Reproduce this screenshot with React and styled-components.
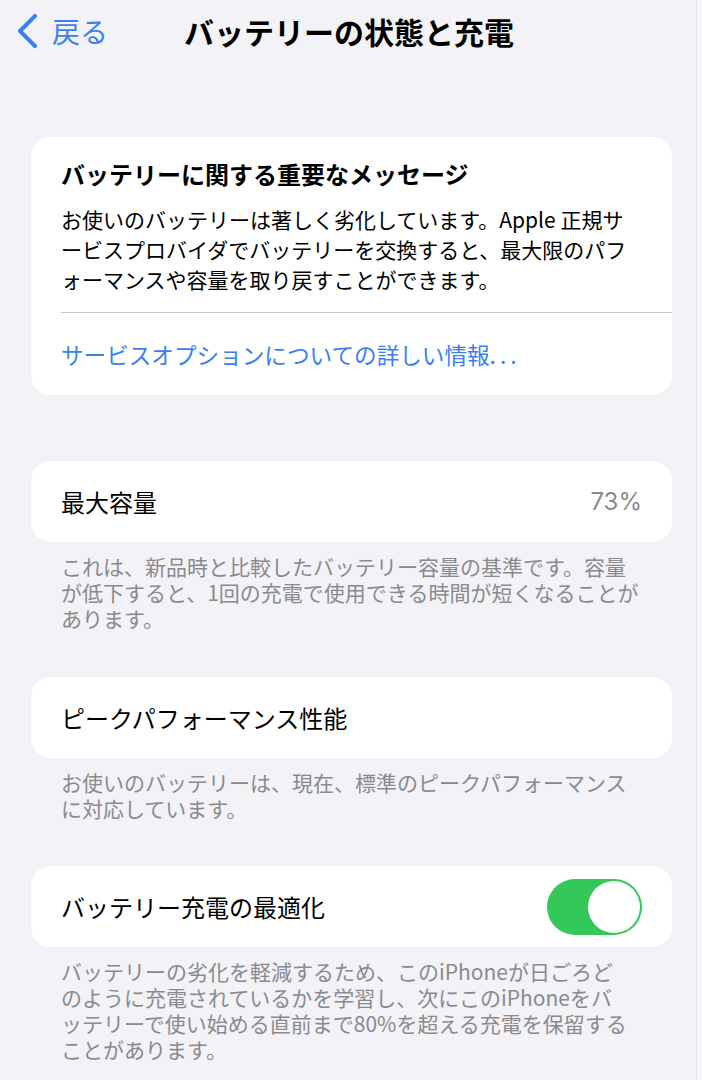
import React from "react";
import styled, { createGlobalStyle } from "styled-components";

const Global = createGlobalStyle`
  html, body { margin: 0; padding: 0; background: #f2f2f7; }
  body {
    font-family: "Noto Sans CJK JP", "Noto Sans", sans-serif;
    -webkit-font-smoothing: antialiased;
  }
`;

const Page = styled.div`
  display: grid;
  grid-template-columns: 696px 6px;
  width: 702px;
  min-height: 1080px;
  background: #f2f2f7;
`;

const Edge = styled.div`
  border-left: 1px solid #e3e3e8;
  background: #f6f6f9;
`;

const Main = styled.div`
  display: flex;
  flex-direction: column;
  padding: 0 24px 0 31px;
`;

const Nav = styled.div`
  display: flex;
  align-items: center;
  height: 62px;
  margin-left: -31px;
`;

const Back = styled.div`
  display: flex;
  align-items: center;
  gap: 13px;
  padding-left: 17px;
  color: #3a80f2;
  font-size: 28px;
  line-height: 1;
`;

const Title = styled.div`
  margin-left: 76px;
  font-size: 30px;
  font-weight: 700;
  color: #000;
`;

const Card = styled.div`
  background: #fff;
  border-radius: 20px;
  margin-top: ${(p) => p.$mt || 0}px;
`;

const Message = styled.div`
  padding: 22px 30px 18px 30px;
`;

const MsgTitle = styled.div`
  font-size: 24px;
  font-weight: 700;
  line-height: 30px;
  color: #000;
`;

const MsgBody = styled.div`
  margin-top: 15px;
  font-size: 21px;
  line-height: 30px;
  color: #000;
  white-space: nowrap;
`;

const Separator = styled.div`
  height: 1px;
  background: #c8c8cc;
  margin-left: 30px;
`;

const LinkRow = styled.div`
  padding: 27px 30px 25px 30px;
  font-size: 22.6px;
  line-height: 30px;
  color: #3a80f2;
`;

const Dots = styled.span`
  letter-spacing: 4px;
`;

const Row = styled.div`
  display: flex;
  align-items: center;
  justify-content: space-between;
  height: 81px;
  padding: 0 30px 0 30px;
  font-size: 24px;
  color: #000;
`;

const Value = styled.span`
  color: #8a8a8e;
  font-size: 24px;
  font-family: "Inter", "Liberation Sans", sans-serif;
`;

const Footer = styled.div`
  padding: 11px 30px 0 30px;
  font-size: 21px;
  line-height: 26px;
  color: #8a8a8e;
  white-space: nowrap;
`;

const Toggle = styled.div`
  display: flex;
  justify-content: ${(p) => (p.$on ? "flex-end" : "flex-start")};
  align-items: center;
  width: 95px;
  height: 56px;
  padding: 2px;
  box-sizing: border-box;
  border-radius: 28px;
  background: ${(p) => (p.$on ? "#34c759" : "#e9e9eb")};
`;

const Knob = styled.div`
  width: 52px;
  height: 52px;
  border-radius: 50%;
  background: #fff;
`;

const Chevron = () => (
  <svg width="22" height="34" viewBox="0 0 22 34" fill="none">
    <path
      d="M18 2 L3 17 L18 32"
      stroke="#3a80f2"
      strokeWidth="4"
      strokeLinecap="round"
      strokeLinejoin="round"
    />
  </svg>
);

export default function App() {
  return (
    <>
      <Global />
      <Page>
        <Main>
          <Nav>
            <Back>
              <Chevron />
              <span>戻る</span>
            </Back>
            <Title>バッテリーの状態と充電</Title>
          </Nav>

          <Card $mt={75}>
            <Message>
              <MsgTitle>バッテリーに関する重要なメッセージ</MsgTitle>
              <MsgBody>
                お使いのバッテリーは著しく劣化しています。Apple 正規サ
                <br />
                ービスプロバイダでバッテリーを交換すると、最大限のパフ
                <br />
                ォーマンスや容量を取り戻すことができます。
              </MsgBody>
            </Message>
            <Separator />
            <LinkRow>
              サービスオプションについての詳しい情報<Dots>...</Dots>
            </LinkRow>
          </Card>

          <Card $mt={66}>
            <Row>
              <span>最大容量</span>
              <Value>73%</Value>
            </Row>
          </Card>
          <Footer>
            これは、新品時と比較したバッテリー容量の基準です。容量
            <br />
            が低下すると、1回の充電で使用できる時間が短くなることが
            <br />
            あります。
          </Footer>

          <Card $mt={46}>
            <Row>
              <span>ピークパフォーマンス性能</span>
            </Row>
          </Card>
          <Footer>
            お使いのバッテリーは、現在、標準のピークパフォーマンス
            <br />
            に対応しています。
          </Footer>

          <Card $mt={45}>
            <Row>
              <span>バッテリー充電の最適化</span>
              <Toggle $on>
                <Knob />
              </Toggle>
            </Row>
          </Card>
          <Footer>
            バッテリーの劣化を軽減するため、このiPhoneが日ごろど
            <br />
            のように充電されているかを学習し、次にこのiPhoneをバ
            <br />
            ッテリーで使い始める直前まで80%を超える充電を保留する
            <br />
            ことがあります。
          </Footer>
        </Main>
        <Edge />
      </Page>
    </>
  );
}
